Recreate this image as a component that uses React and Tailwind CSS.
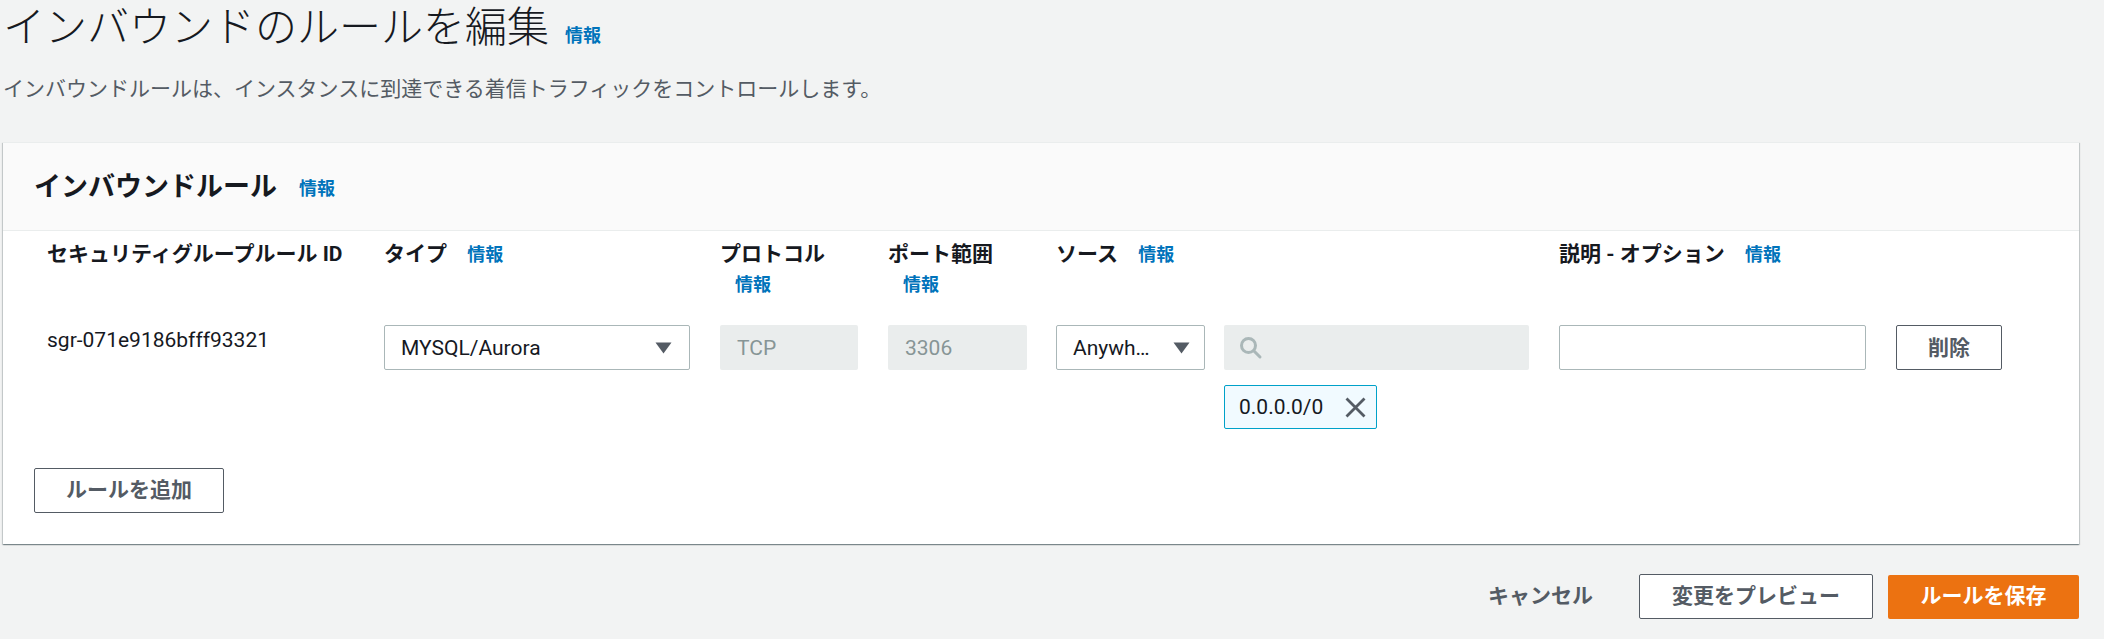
import React from 'react'

const font = { fontFamily: 'Roboto, "Noto Sans CJK JP", sans-serif' }

function Info() {
  return (
    <>
      {' '}
      <a className="pl-[15px] inline-block text-[18px] font-bold text-[#0073bb] cursor-pointer">情報</a>
    </>
  )
}

function Caret() {
  return (
    <svg width="17" height="12" viewBox="0 0 17 12" className="shrink-0">
      <path d="M0.5 0.5h16L8.5 11.5z" fill="#545b64" />
    </svg>
  )
}

function SearchIcon() {
  return (
    <svg width="24" height="24" viewBox="0 0 24 24" fill="none" stroke="#aab7b8" strokeWidth="3" strokeLinecap="round">
      <circle cx="9.5" cy="9.5" r="7" />
      <path d="M15 15l6 6" />
    </svg>
  )
}

function CloseIcon() {
  return (
    <svg width="21" height="21" viewBox="0 0 21 21" fill="none" stroke="#545b64" strokeWidth="2.8">
      <path d="M1.5 1.5l18 18M19.5 1.5l-18 18" />
    </svg>
  )
}

const Btn = ({ children, className = '' }) => (
  <button className={`h-[45px] border border-[#545b64] rounded-[2px] bg-white text-[21px] font-bold text-[#545b64] ${className}`}>
    {children}
  </button>
)

const cols = 'grid grid-cols-[337px_336px_168px_168px_503px_337px_106px]'

export default function App() {
  return (
    <div style={font} className="min-h-screen bg-[#f2f3f3] text-[#16191f]">
      <div className="pl-[3px]">
        <div className="flex items-baseline">
          <h1 className="text-[42px] leading-[56px] font-light">インバウンドのルールを編集</h1>
          <a className="ml-[16px] text-[18px] font-bold text-[#0073bb]">情報</a>
        </div>
        <p className="mt-[18px] text-[21px] leading-[30px] text-[#545b64]">
          インバウンドルールは、インスタンスに到達できる着信トラフィックをコントロールします。
        </p>

        <div className="mt-[38px] w-[2076px] bg-white border-t border-[#eaeded] shadow-[0_1px_1px_0_rgba(0,28,36,0.3),1px_1px_1px_0_rgba(0,28,36,0.15),-1px_1px_1px_0_rgba(0,28,36,0.15)]">
          <div className="h-[88px] flex items-center pl-[31px] bg-[#fafafa] border-b border-[#eaeded]">
            <h2 className="text-[27px] font-bold leading-[36px]">インバウンドルール</h2>
            <a className="ml-[22px] mt-[4px] text-[18px] font-bold text-[#0073bb]">情報</a>
          </div>

          <div className="pl-[44px] pt-[8px] pb-[31px]">
            <div className={`${cols} text-[21px] leading-[30px] font-bold h-[86px]`}>
              <div>セキュリティグループルール ID</div>
              <div>タイプ<Info /></div>
              <div className="w-[138px]">プロトコル<Info /></div>
              <div className="w-[139px]">ポート範囲<Info /></div>
              <div>ソース<Info /></div>
              <div>説明 - オプション<Info /></div>
              <div />
            </div>

            <div className={`${cols} text-[21px] leading-[30px]`}>
              <div>sgr-071e9186bfff93321</div>
              <div>
                <div className="w-[306px] h-[45px] border border-[#aab7b8] rounded-[2px] flex items-center justify-between pl-[16px] pr-[17px]">
                  <span>MYSQL/Aurora</span>
                  <Caret />
                </div>
              </div>
              <div>
                <div className="w-[138px] h-[45px] rounded-[2px] bg-[#eaeded] text-[#879596] flex items-center pl-[17px]">TCP</div>
              </div>
              <div>
                <div className="w-[139px] h-[45px] rounded-[2px] bg-[#eaeded] text-[#879596] flex items-center pl-[17px]">3306</div>
              </div>
              <div>
                <div className="flex gap-[19px]">
                  <div className="w-[149px] h-[45px] border border-[#aab7b8] rounded-[2px] flex items-center justify-between pl-[16px] pr-[14px]">
                    <span>Anywh…</span>
                    <Caret />
                  </div>
                  <div className="w-[305px] h-[45px] rounded-[2px] bg-[#eaeded] flex items-center pl-[15px]">
                    <SearchIcon />
                  </div>
                </div>
                <div className="ml-[168px] mt-[15px] w-[153px] h-[44px] border border-[#00a1c9] rounded-[2px] bg-[#f1faff] flex items-center justify-between pl-[14px] pr-[10px]">
                  <span>0.0.0.0/0</span>
                  <CloseIcon />
                </div>
              </div>
              <div>
                <div className="w-[307px] h-[45px] border border-[#aab7b8] rounded-[2px] bg-white" />
              </div>
              <div>
                <Btn className="w-[106px]">削除</Btn>
              </div>
            </div>

            <Btn className="mt-[39px] ml-[-13px] w-[190px] h-[44px]">ルールを追加</Btn>
          </div>
        </div>

        <div className="w-[2076px] mt-[30px] flex justify-end items-center">
          <button className="text-[21px] font-bold text-[#545b64] mr-[46px]">キャンセル</button>
          <Btn className="w-[234px] h-[44px]">変更をプレビュー</Btn>
          <button className="ml-[15px] w-[191px] h-[44px] rounded-[2px] bg-[#ec7211] text-white text-[21px] font-bold">ルールを保存</button>
        </div>
      </div>
    </div>
  )
}
